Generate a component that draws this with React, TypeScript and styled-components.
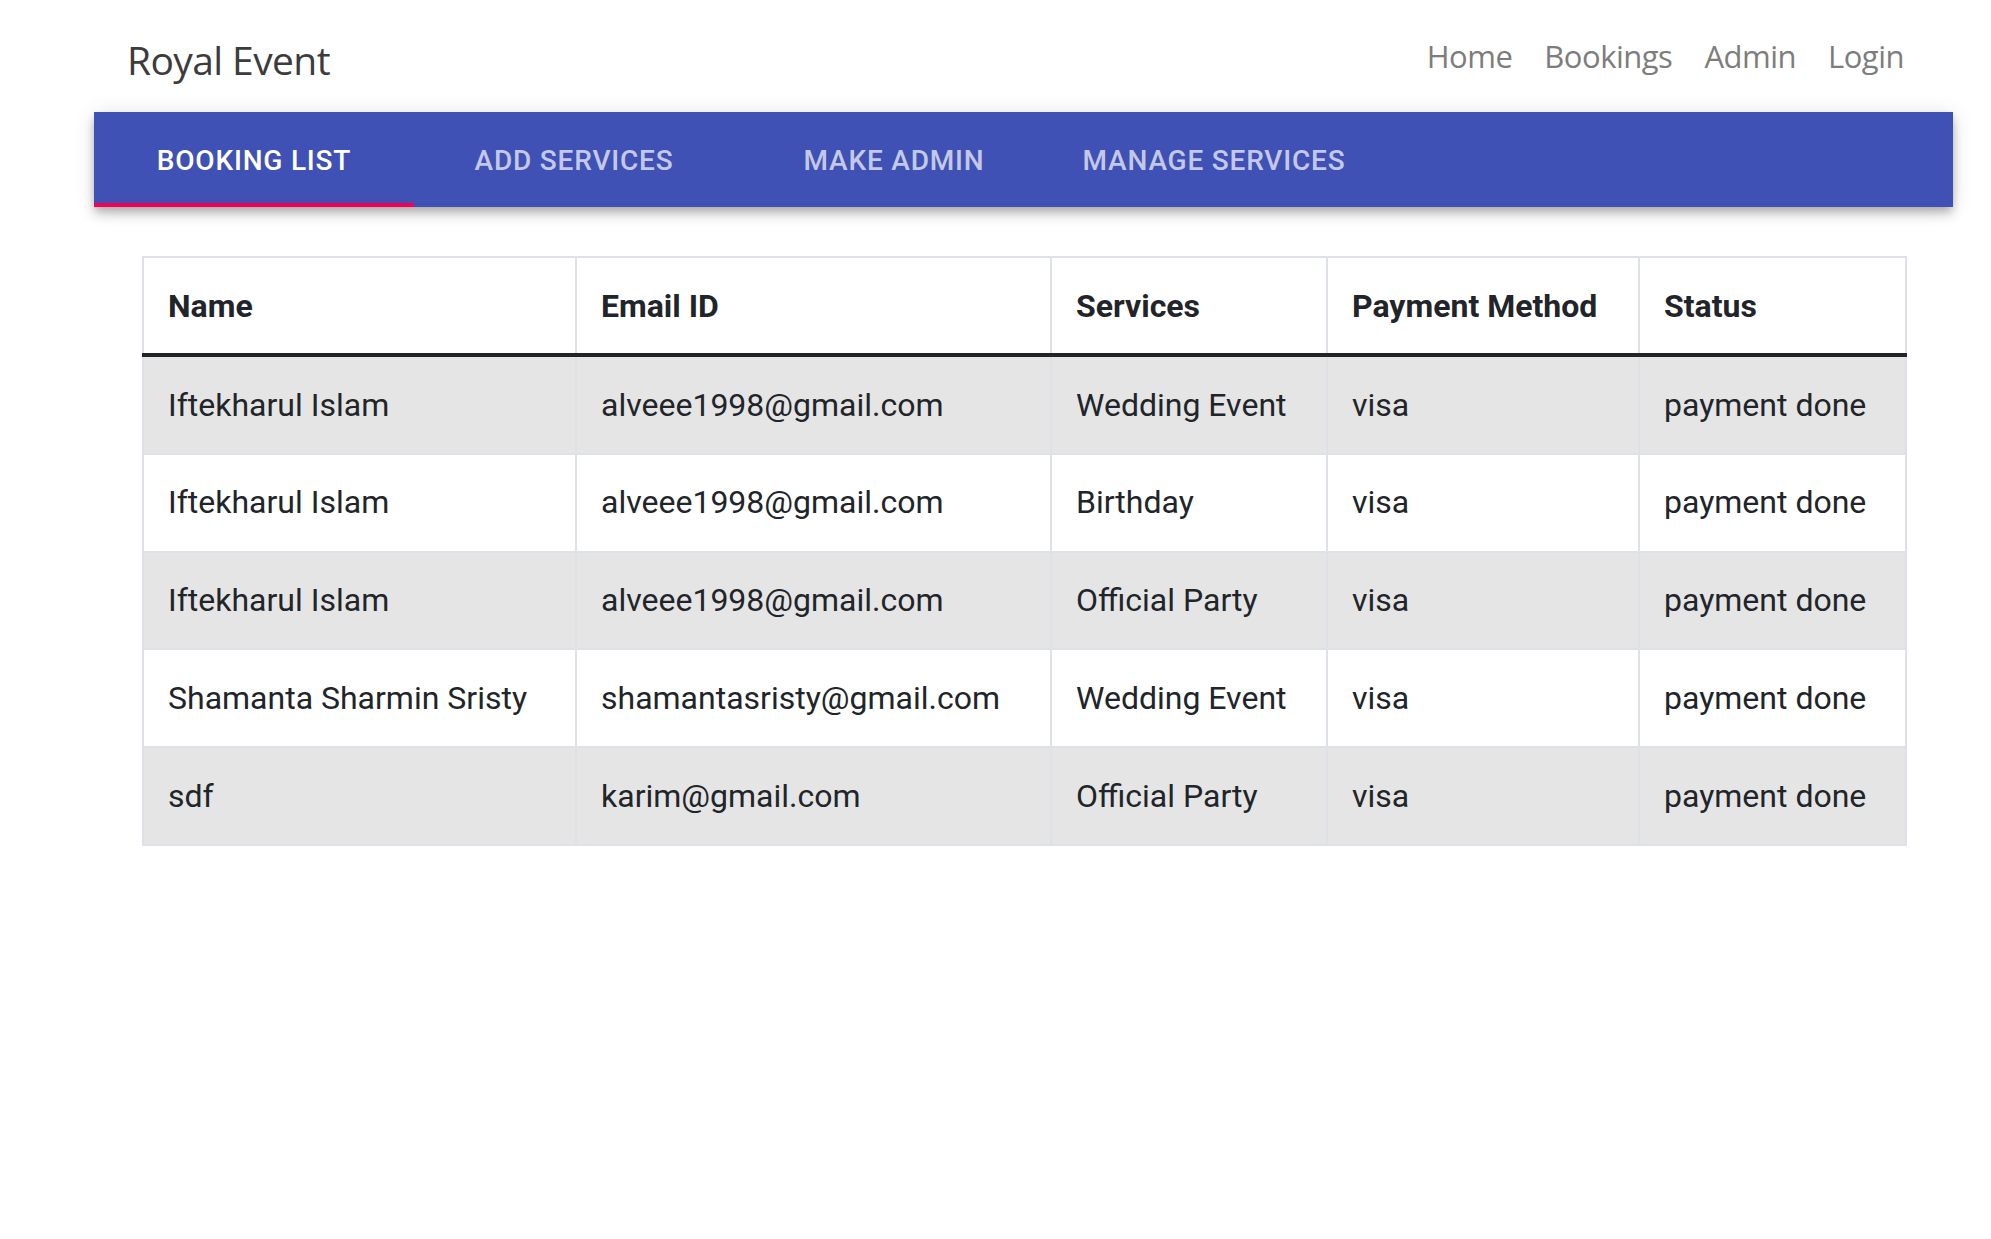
import styled, { createGlobalStyle } from "styled-components"

const GlobalStyle = createGlobalStyle`
  body {
    margin: 0;
    background: #fff;
    font-family: "Open Sans", "Liberation Sans", sans-serif;
  }
  * {
    box-sizing: border-box;
  }
`

const bookings = [
  { name: "Iftekharul Islam", email: "alveee1998@gmail.com", service: "Wedding Event", method: "visa", status: "payment done" },
  { name: "Iftekharul Islam", email: "alveee1998@gmail.com", service: "Birthday", method: "visa", status: "payment done" },
  { name: "Iftekharul Islam", email: "alveee1998@gmail.com", service: "Official Party", method: "visa", status: "payment done" },
  { name: "Shamanta Sharmin Sristy", email: "shamantasristy@gmail.com", service: "Wedding Event", method: "visa", status: "payment done" },
  { name: "sdf", email: "karim@gmail.com", service: "Official Party", method: "visa", status: "payment done" },
]

const columns = [
  { title: "Name", width: 433 },
  { title: "Email ID", width: 475 },
  { title: "Services", width: 276 },
  { title: "Payment Method", width: 312 },
  { title: "Status", width: 267 },
]

const tabs = ["Booking List", "Add Services", "Make Admin", "Manage Services"]

function App() {
  return (
    <>
      <GlobalStyle />
      <Navbar>
        <Brand>Royal Event</Brand>
        <NavLinks>
          <NavLink>Home</NavLink>
          <NavLink>Bookings</NavLink>
          <NavLink>Admin</NavLink>
          <NavLink>Login</NavLink>
        </NavLinks>
      </Navbar>

      <TabBar>
        {tabs.map((t, i) => (
          <Tab key={t} $active={i === 0}>
            {t}
          </Tab>
        ))}
      </TabBar>

      <Table>
        <colgroup>
          {columns.map((c) => (
            <Col key={c.title} $width={c.width} />
          ))}
        </colgroup>
        <thead>
          <tr>
            {columns.map((c) => (
              <Th key={c.title}>{c.title}</Th>
            ))}
          </tr>
        </thead>
        <tbody>
          {bookings.map((b, i) => (
            <Row key={i} $striped={i % 2 === 0}>
              <Td>{b.name}</Td>
              <Td>{b.email}</Td>
              <Td>{b.service}</Td>
              <Td>{b.method}</Td>
              <Td>{b.status}</Td>
            </Row>
          ))}
        </tbody>
      </Table>
    </>
  )
}

export default App

const Navbar = styled.nav`
  height: 112px;
  display: flex;
  align-items: center;
  justify-content: space-between;
  padding: 0 71px 0 127px;
`

const Brand = styled.span`
  font-size: 39px;
  color: #3c3c3c;
  letter-spacing: -0.6px;
  padding-top: 6px;
`

const NavLinks = styled.div`
  display: flex;
`

const NavLink = styled.a`
  font-size: 31px;
  color: #7d7d7d;
  padding: 0 16px;
  letter-spacing: -0.5px;
  cursor: pointer;
`

const TabBar = styled.div`
  margin: 0 38px 0 94px;
  height: 95px;
  background-color: #3f51b5;
  display: flex;
  box-shadow: 0 4px 8px -2px rgba(0, 0, 0, 0.2), 0 8px 10px 0 rgba(0, 0, 0, 0.14),
    0 2px 20px 0 rgba(0, 0, 0, 0.12);
`

const Tab = styled.div<{ $active?: boolean }>`
  width: 320px;
  height: 100%;
  display: flex;
  align-items: center;
  justify-content: center;
  font-family: Roboto, "Liberation Sans", sans-serif;
  font-weight: 500;
  font-size: 28px;
  letter-spacing: 0.8px;
  text-transform: uppercase;
  color: ${(p) => (p.$active ? "#ffffff" : "rgba(255, 255, 255, 0.7)")};
  border-bottom: 4px solid ${(p) => (p.$active ? "#f50057" : "transparent")};
  padding-top: 6px;
`

const Table = styled.table`
  margin: 49px 0 0 142px;
  width: 1763px;
  table-layout: fixed;
  border-collapse: collapse;
  font-family: Roboto, "Liberation Sans", sans-serif;
  font-size: 32px;
  color: #212529;
  border: 2px solid #dee2e6;
`

const Col = styled.col<{ $width: number }>`
  width: ${(p) => p.$width}px;
`

const Th = styled.th`
  text-align: left;
  font-weight: 700;
  padding: 23.5px 24px;
  line-height: 48px;
  border: 2px solid #dee2e6;
  border-bottom: 4px solid #212529;
  white-space: nowrap;
`

const Row = styled.tr<{ $striped?: boolean }>`
  background-color: ${(p) => (p.$striped ? "#e5e5e5" : "#ffffff")};
`

const Td = styled.td`
  padding: 24.5px 24px 23.5px;
  line-height: 47.75px;
  border: 2px solid #dee2e6;
  white-space: nowrap;
`
